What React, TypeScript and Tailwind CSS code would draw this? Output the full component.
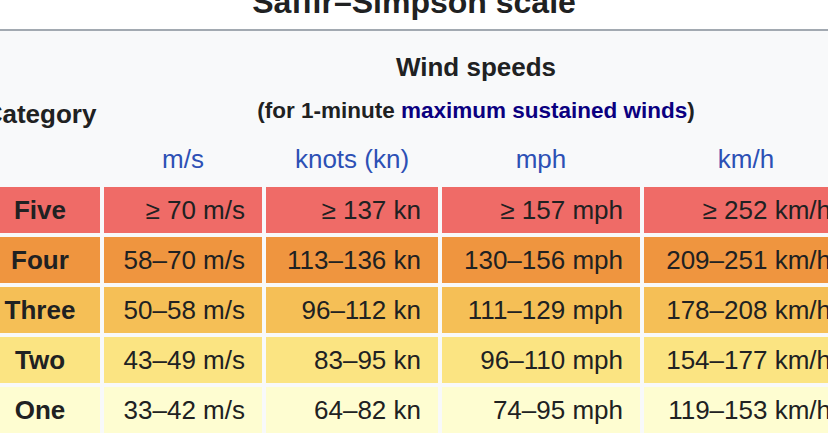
const COLS = 'grid grid-cols-[120px_158px_172px_198px_204px] gap-x-[4px]'

// ─── Row data ───────────────────────────────────
const ROWS = [
  { label: 'Five', bg: 'bg-[#ef6b67]', cells: ['≥ 70 m/s', '≥ 137 kn', '≥ 157 mph', '≥ 252 km/h'] },
  { label: 'Four', bg: 'bg-[#ef953f]', cells: ['58–70 m/s', '113–136 kn', '130–156 mph', '209–251 km/h'] },
  { label: 'Three', bg: 'bg-[#f5bf56]', cells: ['50–58 m/s', '96–112 kn', '111–129 mph', '178–208 km/h'] },
  { label: 'Two', bg: 'bg-[#fbe482]', cells: ['43–49 m/s', '83–95 kn', '96–110 mph', '154–177 km/h'] },
  { label: 'One', bg: 'bg-[#fefdd1]', cells: ['33–42 m/s', '64–82 kn', '74–95 mph', '119–153 km/h'] },
]

const UNITS = ['m/s', 'knots (kn)', 'mph', 'km/h']

export default function App() {
  return (
    <div className="w-[828px] h-[435px] overflow-hidden bg-white text-[#202122] font-['Liberation_Sans',Arial,sans-serif]">
      <div className="w-[868px] ml-[-20px]">

        {/* Caption, scrolled so only its lower part shows */}
        <div className="h-[29px] flex flex-col text-center">
          <div className="-mt-[14px] text-[32px] leading-[32px] font-bold">Saffir–Simpson scale</div>
        </div>

        <div className="border-t-2 border-[#a2a9b1] bg-[#f8f9fa]">

          {/* Header */}
          <div className="flex h-[152px] gap-x-[4px]">
            <div className="w-[120px] pt-[67px] text-center text-[26px] leading-[32px] font-bold">Category</div>
            <div className="w-[744px] flex flex-col pt-[20px]">
              <div className="text-center text-[26px] leading-[32px] font-bold">Wind speeds</div>
              <div className="mt-[14px] text-center text-[22.5px] leading-[28px] font-bold">
                (for 1-minute <span className="text-[#0b0080]">maximum sustained winds</span>)
              </div>
              <div className="mt-[18px] grid grid-cols-[158px_172px_198px_204px] gap-x-[4px]">
                {UNITS.map(u => (
                  <div key={u} className="text-center text-[26px] leading-[32px] text-[#2d50b5]">{u}</div>
                ))}
              </div>
            </div>
          </div>

          {/* Data rows */}
          <div className={`${COLS} gap-y-[4px] pt-[4px]`}>
            {ROWS.map(row => (
              <div key={row.label} className="contents">
                <div className={`${row.bg} h-[46px] text-center text-[26px] leading-[46px] font-bold`}>{row.label}</div>
                {row.cells.map(c => (
                  <div key={c} className={`${row.bg} h-[46px] pr-[17px] text-right text-[26px] leading-[46px] whitespace-nowrap`}>{c}</div>
                ))}
              </div>
            ))}
          </div>

        </div>
      </div>
    </div>
  )
}
